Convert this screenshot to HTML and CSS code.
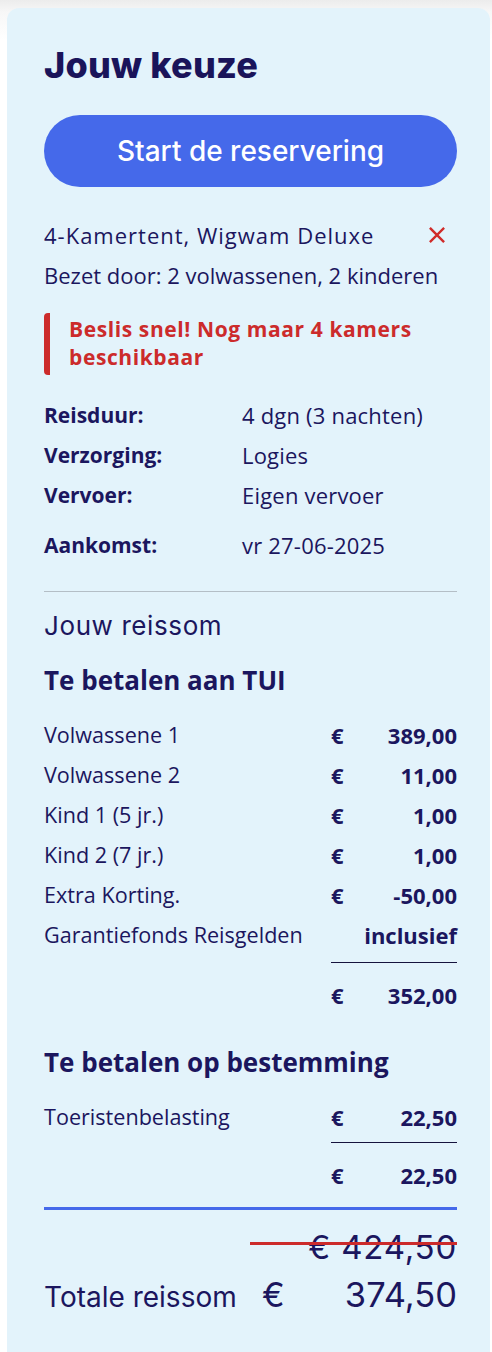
FILE: index.html
```html
<!DOCTYPE html>
<html lang="nl">
<head>
<meta charset="utf-8">
<title>Jouw keuze</title>
<link rel="stylesheet" href="styles.css">
</head>
<body>
<aside class="card">
  <h1 class="title">Jouw keuze</h1>
  <button class="cta">Start de reservering</button>

  <div class="room">
    <div class="room-line">
      <span>4-Kamertent, Wigwam Deluxe</span>
      <svg class="close" viewBox="0 0 20 20" width="18" height="18" aria-hidden="true"><path d="M3 3 L17 17 M17 3 L3 17" stroke="#d02b29" stroke-width="2.6" stroke-linecap="square" fill="none"/></svg>
    </div>
    <div class="room-sub">Bezet door: 2 volwassenen, 2 kinderen</div>
  </div>

  <div class="alert">Beslis snel! Nog maar 4 kamers beschikbaar</div>

  <dl class="details">
    <dt>Reisduur:</dt><dd>4 dgn (3 nachten)</dd>
    <dt>Verzorging:</dt><dd>Logies</dd>
    <dt>Vervoer:</dt><dd>Eigen vervoer</dd>
    <dt class="gap">Aankomst:</dt><dd class="gap">vr 27-06-2025</dd>
  </dl>

  <hr class="divider">

  <h2 class="sum-title">Jouw reissom</h2>
  <h3 class="group-title">Te betalen aan TUI</h3>
  <div class="prices">
    <div class="label">Volwassene 1</div><div class="val"><span>€</span><span>389,00</span></div>
    <div class="label">Volwassene 2</div><div class="val"><span>€</span><span>11,00</span></div>
    <div class="label">Kind 1 (5 jr.)</div><div class="val"><span>€</span><span>1,00</span></div>
    <div class="label">Kind 2 (7 jr.)</div><div class="val"><span>€</span><span>1,00</span></div>
    <div class="label">Extra Korting.</div><div class="val"><span>€</span><span>-50,00</span></div>
    <div class="label">Garantiefonds Reisgelden</div><div class="val end"><span>inclusief</span></div>
    <div class="label"></div><div class="val total"><span>€</span><span>352,00</span></div>
  </div>

  <h3 class="group-title second">Te betalen op bestemming</h3>
  <div class="prices">
    <div class="label">Toeristenbelasting</div><div class="val"><span>€</span><span>22,50</span></div>
    <div class="label"></div><div class="val total short"><span>€</span><span>22,50</span></div>
  </div>

  <hr class="blue-rule">

  <div class="old-price"><s>€ 424,50</s></div>
  <div class="grand">
    <span class="grand-label">Totale reissom</span>
    <span class="grand-cur">€</span>
    <span class="grand-amount">374,50</span>
  </div>
</aside>
</body>
</html>
```

FILE: styles.css
```css
html, body {
  margin: 0;
  padding: 0;
}
body {
  background: linear-gradient(#ececec 0, #f7f7f7 12px, #ffffff 40px);
  padding: 8px 2px 0 7px;
  font-family: "Open Sans", "Noto Sans", sans-serif;
  color: #1b165e;
}
.card {
  background: #e3f3fb;
  border-radius: 12px 12px 0 0;
  padding: 35px 33px 40px 37px;
  min-height: 1344px;
  box-sizing: border-box;
}
.title {
  font-family: Inter, "Noto Sans", sans-serif;
  font-weight: 800;
  font-size: 36px;
  letter-spacing: 0.2px;
  line-height: 44px;
  margin: 0 0 28px;
  color: #1a145a;
}
.cta {
  display: block;
  width: 100%;
  height: 72px;
  border: 0;
  border-radius: 36px;
  background: #4569ea;
  color: #fff;
  font-family: Inter, "Noto Sans", sans-serif;
  font-size: 28px;
  font-weight: 500;
  letter-spacing: 0;
  padding: 0;
}
.room {
  margin-top: 35px;
  font-size: 22px;
}
.room-line {
  display: flex;
  justify-content: space-between;
  align-items: center;
  height: 26px;
  line-height: 26px;
  padding-right: 11px;
  letter-spacing: 1px;
}
.close {
  display: block;
  width: 18px;
  height: 18px;
}
.room-sub {
  margin-top: 14px;
  line-height: 26px;
}
.alert {
  margin-top: 25px;
  border-left: 6px solid #cc2b2b;
  border-radius: 4px;
  padding: 2px 20px 4px 19px;
  color: #cc2b2b;
  font-weight: 700;
  font-size: 21px;
  letter-spacing: 0.6px;
  line-height: 28px;
}
.details {
  display: grid;
  grid-template-columns: 198px 1fr;
  margin: 20px 0 0;
  font-size: 21px;
  line-height: 40px;
}
.details dt {
  font-weight: 700;
  margin: 0;
}
.details dd {
  margin: 0;
  font-size: 22px;
  letter-spacing: 0.2px;
}
.details .gap {
  margin-top: 10px;
}
.divider {
  border: 0;
  border-top: 1px solid #b4bec6;
  margin: 26px 0 0;
}
.sum-title {
  font-family: Inter, "Noto Sans", sans-serif;
  font-weight: 400;
  font-size: 26px;
  letter-spacing: 0.6px;
  margin: 19px 0 0;
  line-height: 30px;
}
.group-title {
  font-size: 26px;
  font-weight: 700;
  margin: 23px 0 0;
  line-height: 32px;
}
.group-title.second {
  margin-top: 31px;
}
.prices {
  display: grid;
  grid-template-columns: 1fr 126px;
  font-size: 21.6px;
  line-height: 40px;
  margin-top: 19px;
}
.val {
  display: flex;
  justify-content: space-between;
  font-weight: 700;
  font-size: 22px;
}
.val.end {
  justify-content: flex-end;
}
.val.total {
  border-top: 1.5px solid #15133d;
  margin-top: 7px;
  padding-top: 12px;
}
.val.total.short {
  margin-top: 5px;
}
.blue-rule {
  border: 0;
  border-top: 3px solid #4569ea;
  margin: 12px 0 0;
}
.old-price {
  text-align: right;
  font-family: Inter, "Noto Sans", sans-serif;
  font-size: 33px;
  letter-spacing: 0.8px;
  line-height: 40px;
  margin-top: 17px;
  color: #1b165e;
}
.old-price s {
  text-decoration: none;
  position: relative;
  display: inline-block;
}
.old-price s::after {
  content: "";
  position: absolute;
  right: 0;
  top: 15px;
  width: 207px;
  height: 3px;
  background: #cc2b2b;
}
.grand {
  display: grid;
  grid-template-columns: 218px auto 1fr;
  align-items: baseline;
  margin-top: 8px;
  line-height: 40px;
  font-family: Inter, "Noto Sans", sans-serif;
}
.grand-label {
  font-size: 28px;
}
.grand-cur {
  font-size: 34px;
}
.grand-amount {
  font-size: 34.5px;
  text-align: right;
}
```
